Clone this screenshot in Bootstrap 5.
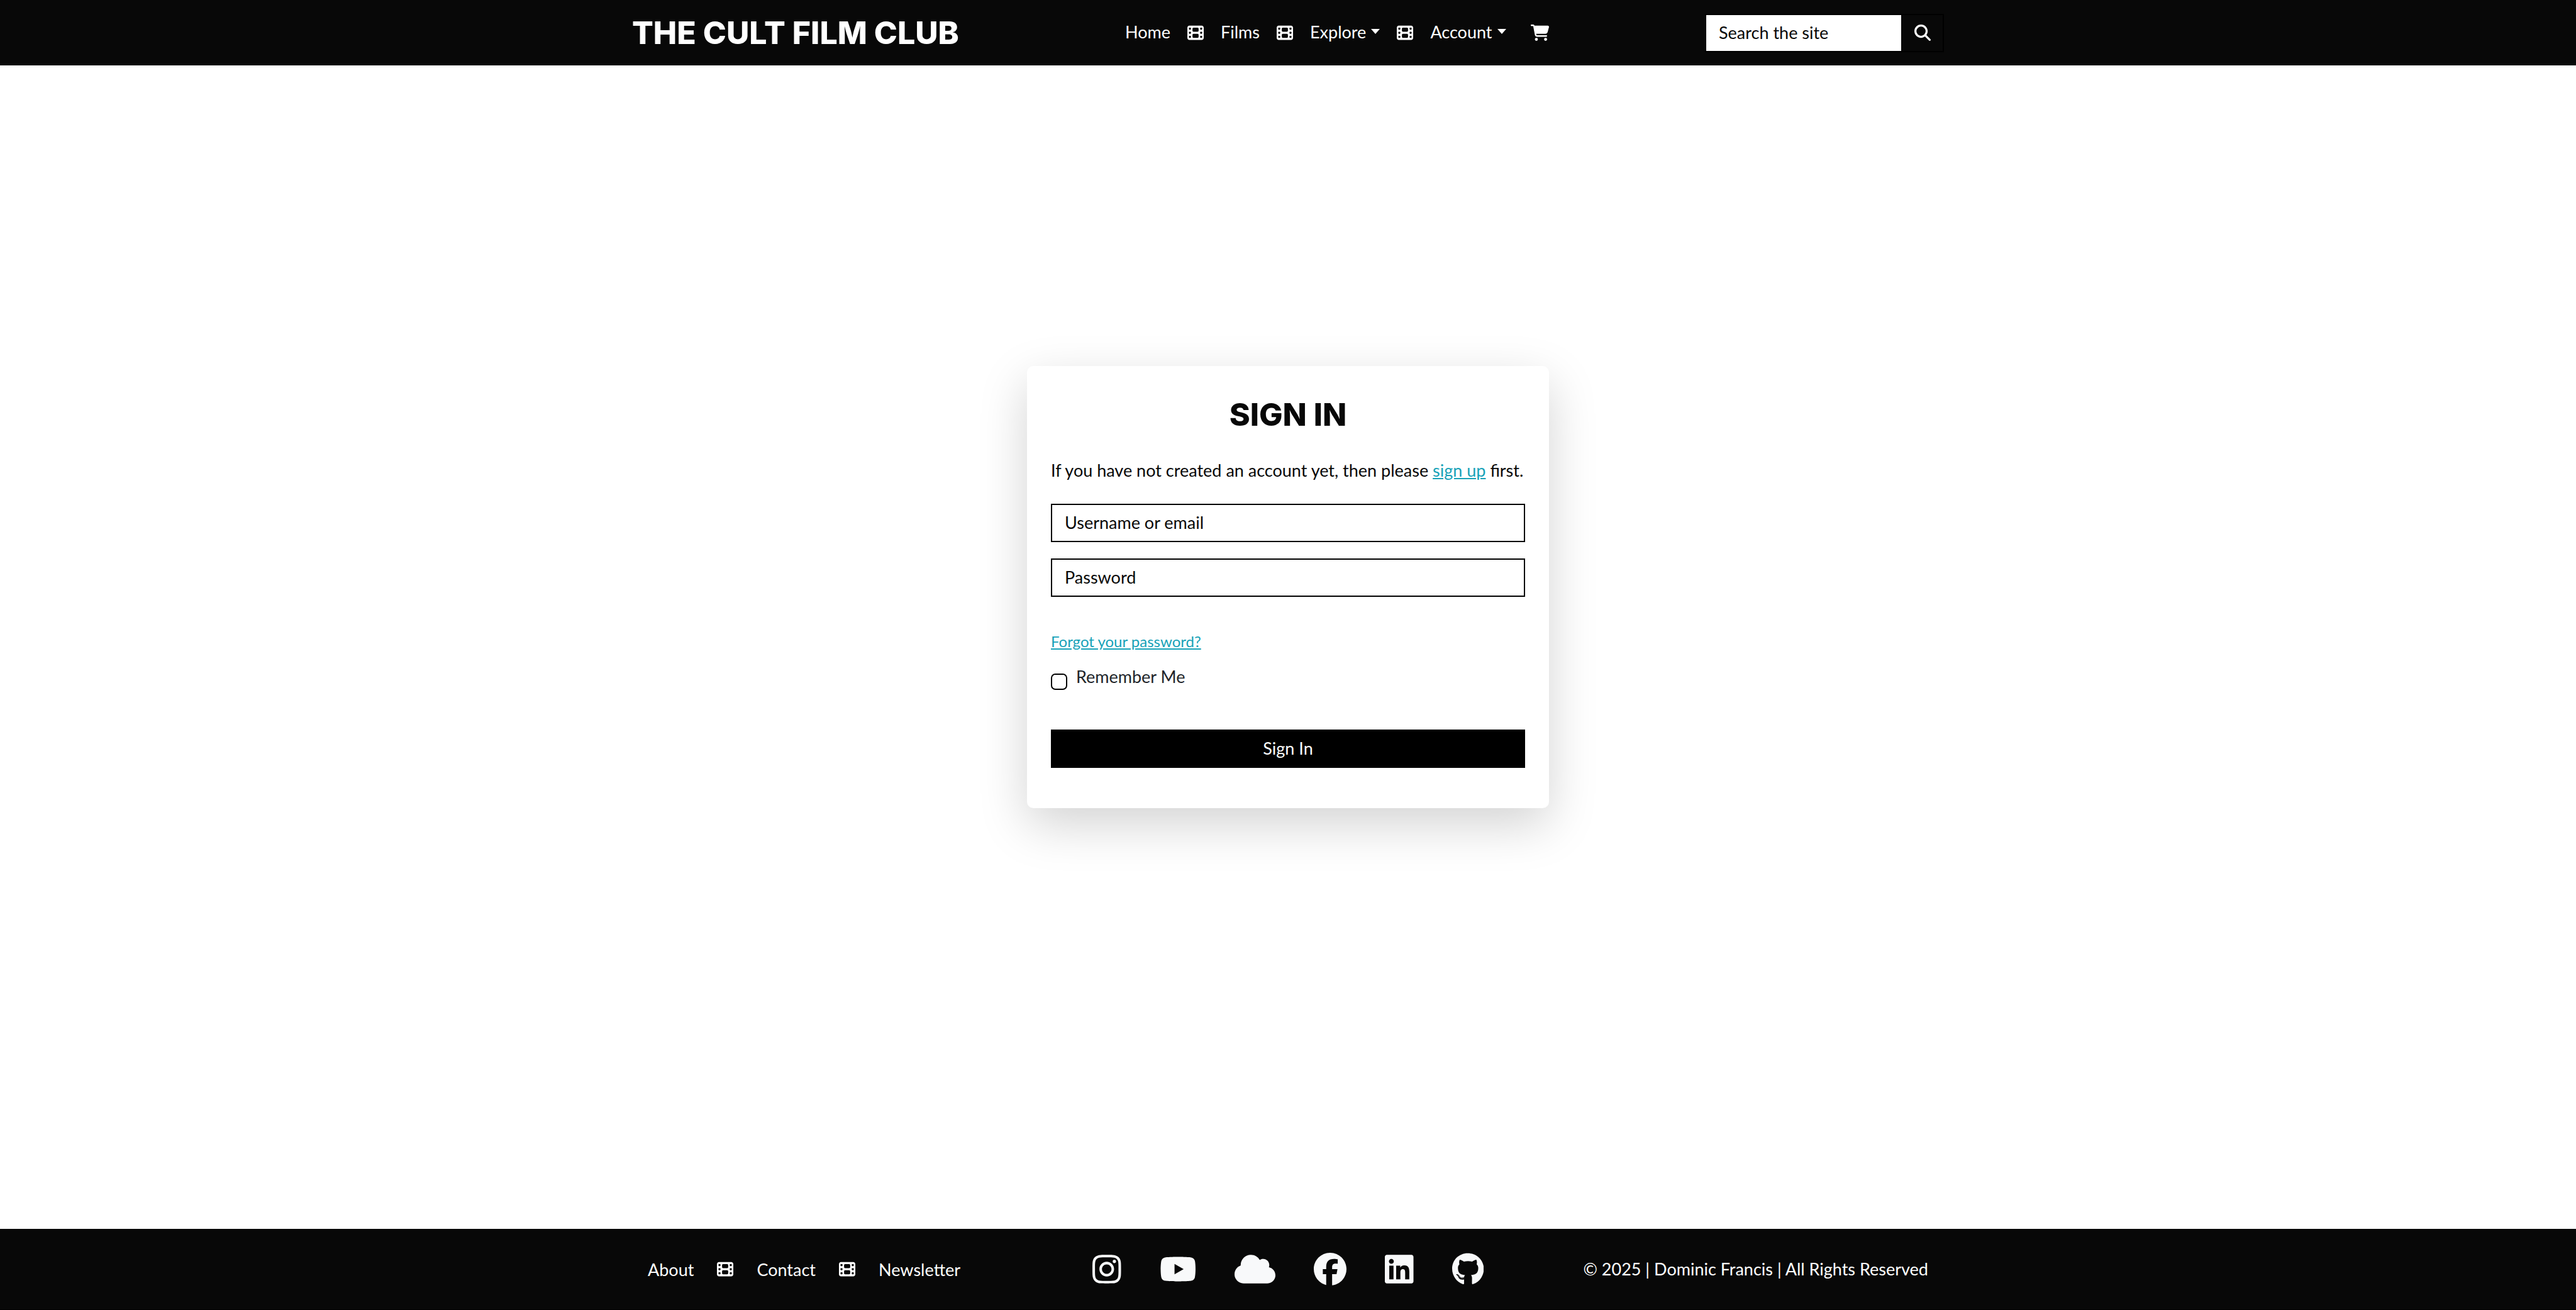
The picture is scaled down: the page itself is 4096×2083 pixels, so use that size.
<!DOCTYPE html>
<html lang="en">
<head>
<meta charset="utf-8">
<meta name="viewport" content="width=device-width, initial-scale=1">
<title>The Cult Film Club - Sign In</title>
<link rel="stylesheet" href="https://cdn.jsdelivr.net/npm/bootstrap@5.3.0/dist/css/bootstrap.min.css">
<style>
  :root { --ink: #080808; --paper: #fff; --accent: #17a2b8; --off-white: #f8f9fa; }
  body { font-family: Lato, "Open Sans", sans-serif; font-size: 27px; line-height: 39px; background: var(--paper); }
  .site-container { width: 100%; max-width: 2124px; margin: 0 auto; padding: 0 19px; }
  .site-bar { background: var(--ink); color: var(--paper); }
  .site-header { min-height: 104px; padding: 21px 0; --bs-navbar-nav-link-padding-x: 0; }
  .site-header .navbar-brand { font-family: Inter, Lato, sans-serif; font-size: 50px; line-height: 58px; font-weight: 800; color: var(--paper); margin: 0; padding: 0; }
  .site-nav { gap: 27px; padding-left: 16px; }
  .site-nav .nav-link { color: var(--paper); padding-top: 0; padding-bottom: 3px; }
  .site-nav .dropdown-toggle::after { border-width: 8px 7px 0; margin-left: 8px; }
  .site-nav .cart-item { margin-left: 12px; }
  .icon { height: 26px; width: auto; display: block; fill: currentColor; }
  .social-list .icon { height: 52px; }
  .site-search { width: 380px; }
  .form-control.field { height: 61px; border: 2px solid #000; border-radius: 0; font-size: 27px; line-height: 39px; padding: 8px 20px 10px; color: var(--ink); background: var(--paper); }
  .form-control.field::placeholder { color: var(--ink); opacity: 1; }
  .search-btn { width: 66px; border: 2px solid #000; border-left: 0; border-radius: 0; background: var(--ink); color: var(--paper); padding: 0; }
  .sign-area { min-height: calc(80vh - 8px); }
  .sign-card { width: 830px; max-width: 100%; padding: 46px 38px 64px; border: 0; border-radius: 10px; box-shadow: 0 26px 77px rgba(0, 0, 0, .175); color: var(--ink); }
  .sign-title { font-family: Inter, Lato, sans-serif; font-size: 50px; line-height: 62px; font-weight: 800; margin-bottom: 38px; }
  .sign-intro { margin-bottom: 34px; }
  .sign-card a { color: var(--accent); }
  .sign-card form .field { margin-bottom: 26px; }
  .forgot { display: inline-block; font-size: 24px; line-height: 36px; margin: 27px 0 18px; }
  .remember { min-height: 39px; gap: 14px; margin-bottom: 63px; }
  .remember .form-check-input { width: 26px; height: 26px; margin: 15px 0 0; border: 2px solid #000; border-radius: 7px; flex: none; }
  .remember label { color: #212529; }
  .sign-btn { height: 61px; border: 0; border-radius: 0; background: #000; color: var(--paper); font-size: 27px; line-height: 39px; padding: 10px 20px 12px; }
  .sign-btn:hover { background: #222; color: var(--paper); }
  .site-footer { min-height: 129px; border-bottom: 1px solid #000; }
  .footer-links { gap: 37px; padding-left: 25px; }
  .social-list { gap: 61px; color: var(--off-white); }
  .site-footer a { color: inherit; text-decoration: none; }
  .copyright { padding: 0 25px 2px 0; white-space: nowrap; }
</style>
</head>
<body class="d-flex flex-column min-vh-100">
<svg class="d-none" aria-hidden="true">
  <symbol id="film" viewBox="0 0 512 512"><path d="M0 96C0 60.7 28.7 32 64 32H448c35.3 0 64 28.7 64 64V416c0 35.3-28.7 64-64 64H64c-35.3 0-64-28.7-64-64V96zM48 368v32c0 8.800 7.200 16 16 16H96c8.800 0 16-7.200 16-16V368c0-8.800-7.200-16-16-16H64c-8.800 0-16 7.200-16 16zm368-16c-8.800 0-16 7.200-16 16v32c0 8.800 7.200 16 16 16h32c8.800 0 16-7.200 16-16V368c0-8.800-7.200-16-16-16H416zM48 240v32c0 8.800 7.200 16 16 16H96c8.800 0 16-7.200 16-16V240c0-8.800-7.200-16-16-16H64c-8.800 0-16 7.200-16 16zm368-16c-8.800 0-16 7.200-16 16v32c0 8.800 7.200 16 16 16h32c8.800 0 16-7.200 16-16V240c0-8.800-7.200-16-16-16H416zM48 112v32c0 8.800 7.200 16 16 16H96c8.800 0 16-7.200 16-16V112c0-8.800-7.200-16-16-16H64c-8.800 0-16 7.200-16 16zM416 96c-8.800 0-16 7.200-16 16v32c0 8.800 7.200 16 16 16h32c8.800 0 16-7.200 16-16V112c0-8.800-7.200-16-16-16H416zM160 128v64c0 17.700 14.300 32 32 32H320c17.700 0 32-14.300 32-32V128c0-17.700-14.300-32-32-32H192c-17.700 0-32 14.300-32 32zm32 160c-17.700 0-32 14.300-32 32v64c0 17.700 14.300 32 32 32H320c17.700 0 32-14.300 32-32V320c0-17.700-14.300-32-32-32H192z"/></symbol>
</svg>

<header class="site-bar navbar navbar-expand site-header">
  <div class="site-container d-flex flex-wrap align-items-center justify-content-between">
    <a class="navbar-brand" href="#">THE CULT FILM CLUB</a>
    <nav aria-label="Main">
      <ul class="navbar-nav site-nav align-items-center">
        <li class="nav-item"><a class="nav-link" href="#">Home</a></li>
        <li aria-hidden="true"><svg class="icon" viewBox="0 0 512 512"><use href="#film"/></svg></li>
        <li class="nav-item"><a class="nav-link" href="#">Films</a></li>
        <li aria-hidden="true"><svg class="icon" viewBox="0 0 512 512"><use href="#film"/></svg></li>
        <li class="nav-item"><a class="nav-link dropdown-toggle" href="#" role="button">Explore</a></li>
        <li aria-hidden="true"><svg class="icon" viewBox="0 0 512 512"><use href="#film"/></svg></li>
        <li class="nav-item"><a class="nav-link dropdown-toggle" href="#" role="button">Account</a></li>
        <li class="nav-item cart-item"><a class="d-block text-white" href="#" aria-label="Basket"><svg class="icon" viewBox="0 0 576 512"><path d="M0 24C0 10.700 10.700 0 24 0H69.500c22 0 41.500 12.800 50.600 32h411c26.300 0 45.500 25 38.600 50.400l-41 152.300c-8.500 31.400-37 53.300-69.500 53.300H170.700l5.400 28.500c2.200 11.300 12.100 19.500 23.600 19.500H488c13.300 0 24 10.700 24 24s-10.700 24-24 24H199.700c-34.600 0-64.300-24.600-70.700-58.500L77.400 54.500c-.7-3.800-4-6.500-7.900-6.500H24C10.700 48 0 37.300 0 24zM128 464a48 48 0 1 1 96 0 48 48 0 1 1 -96 0zm336-48a48 48 0 1 1 0 96 48 48 0 1 1 0-96z"/></svg></a></li>
      </ul>
    </nav>
    <form class="site-search d-flex" role="search">
      <input class="form-control field" type="search" placeholder="Search the site" aria-label="Search the site">
      <button class="btn search-btn d-flex align-items-center justify-content-center flex-shrink-0" type="submit" aria-label="Search"><svg class="icon" viewBox="0 0 512 512"><path d="M416 208c0 45.900-14.900 88.300-40 122.700L502.600 457.400c12.500 12.500 12.500 32.800 0 45.300s-32.800 12.500-45.300 0L330.700 376c-34.400 25.200-76.800 40-122.700 40C93.100 416 0 322.900 0 208S93.100 0 208 0S416 93.100 416 208zM208 352a144 144 0 1 0 0-288 144 144 0 1 0 0 288z"/></svg></button>
    </form>
  </div>
</header>

<main class="flex-grow-1">
  <section class="sign-area d-flex align-items-center justify-content-center">
    <div class="card sign-card">
      <h1 class="sign-title text-center">SIGN IN</h1>
      <p class="sign-intro">If you have not created an account yet, then please <a href="#">sign up</a> first.</p>
      <form>
        <input class="form-control field" type="text" placeholder="Username or email" aria-label="Username or email">
        <input class="form-control field" type="password" placeholder="Password" aria-label="Password">
        <a class="forgot" href="#">Forgot your password?</a>
        <div class="remember d-flex align-items-start">
          <input class="form-check-input" type="checkbox" id="remember">
          <label for="remember">Remember Me</label>
        </div>
        <button class="btn sign-btn d-block w-100" type="submit">Sign In</button>
      </form>
    </div>
  </section>
</main>

<footer class="site-bar site-footer d-flex align-items-center">
  <div class="site-container">
    <div class="row align-items-center gx-0">
      <div class="col-4">
        <ul class="footer-links list-unstyled d-flex align-items-center mb-0">
          <li><a href="#">About</a></li>
          <li aria-hidden="true"><svg class="icon" viewBox="0 0 512 512"><use href="#film"/></svg></li>
          <li><a href="#">Contact</a></li>
          <li aria-hidden="true"><svg class="icon" viewBox="0 0 512 512"><use href="#film"/></svg></li>
          <li><a href="#">Newsletter</a></li>
        </ul>
      </div>
      <div class="col-4">
        <ul class="social-list list-unstyled d-flex align-items-center justify-content-center mb-0">
          <li><a href="#" aria-label="Instagram"><svg class="icon" viewBox="0 0 448 512"><path d="M224.100 141c-63.600 0-114.900 51.300-114.900 114.900s51.300 114.900 114.900 114.900S339 319.500 339 255.900 287.700 141 224.100 141zm0 189.600c-41.100 0-74.700-33.500-74.700-74.700s33.500-74.700 74.700-74.700 74.700 33.500 74.700 74.700-33.600 74.700-74.700 74.700zm146.400-194.300c0 14.900-12 26.800-26.800 26.800-14.900 0-26.800-12-26.800-26.800s12-26.800 26.800-26.800 26.800 12 26.800 26.800zm76.100 27.200c-1.700-35.900-9.900-67.700-36.200-93.900-26.200-26.200-58-34.400-93.900-36.200-37-2.100-147.900-2.100-184.900 0-35.800 1.700-67.600 9.900-93.900 36.100s-34.400 58-36.200 93.900c-2.100 37-2.100 147.900 0 184.900 1.700 35.900 9.900 67.700 36.200 93.900s58 34.400 93.900 36.200c37 2.100 147.900 2.100 184.900 0 35.900-1.700 67.700-9.900 93.900-36.200 26.200-26.200 34.400-58 36.200-93.900 2.100-37 2.100-147.800 0-184.800zM398.800 388c-7.800 19.600-22.900 34.700-42.600 42.600-29.500 11.700-99.500 9-132.100 9s-102.700 2.600-132.100-9c-19.600-7.800-34.700-22.900-42.600-42.600-11.700-29.500-9-99.500-9-132.100s-2.600-102.700 9-132.100c7.800-19.600 22.900-34.700 42.600-42.600 29.500-11.700 99.500-9 132.100-9s102.700-2.600 132.100 9c19.600 7.800 34.700 22.900 42.600 42.600 11.700 29.500 9 99.500 9 132.100s2.700 102.700-9 132.100z"/></svg></a></li>
          <li><a href="#" aria-label="YouTube"><svg class="icon" viewBox="0 0 576 512"><path d="M549.655 124.083c-6.281-23.650-24.787-42.276-48.284-48.597C458.781 64 288 64 288 64S117.220 64 74.629 75.486c-23.497 6.322-42.003 24.947-48.284 48.597-11.412 42.867-11.412 132.305-11.412 132.305s0 89.438 11.412 132.305c6.281 23.650 24.787 41.500 48.284 47.821C117.220 448 288 448 288 448s170.780 0 213.371-11.486c23.497-6.321 42.003-24.171 48.284-47.821 11.412-42.867 11.412-132.305 11.412-132.305s0-89.438-11.412-132.305zm-317.510 213.508V175.185l142.739 81.205-142.739 81.201z"/></svg></a></li>
          <li><a href="#" aria-label="Bluesky"><svg class="icon" viewBox="0 0 640 512"><path d="M0 336c0 79.500 64.500 144 144 144H512c70.700 0 128-57.300 128-128c0-61.900-44-113.600-102.400-125.400c4.100-10.700 6.400-22.400 6.400-34.600c0-53-43-96-96-96c-19.700 0-38.100 6-53.300 16.200C367 64.200 315.300 32 256 32C167.600 32 96 103.600 96 192c0 2.700 .1 5.400 .2 8.100C40.200 219.800 0 273.200 0 336z"/></svg></a></li>
          <li><a href="#" aria-label="Facebook"><svg class="icon" viewBox="0 0 512 512"><path d="M512 256C512 114.600 397.400 0 256 0S0 114.600 0 256C0 376 82.700 476.800 194.200 504.500V334.200H141.400V256h52.800V222.300c0-87.100 39.400-127.500 125-127.500c16.200 0 44.200 3.200 55.700 6.400V172c-6-.6-16.500-1-29.600-1c-42 0-58.200 15.900-58.200 57.200V256h83.600l-14.400 78.200H287V510.100C413.800 494.800 512 386.900 512 256z"/></svg></a></li>
          <li><a href="#" aria-label="LinkedIn"><svg class="icon" viewBox="0 0 448 512"><path d="M416 32H31.900C14.300 32 0 46.500 0 64.300v383.400C0 465.500 14.300 480 31.900 480H416c17.600 0 32-14.500 32-32.300V64.300c0-17.800-14.400-32.300-32-32.300zM135.400 416H69V202.200h66.500V416zm-33.200-243c-21.300 0-38.500-17.300-38.500-38.500S80.900 96 102.200 96c21.200 0 38.500 17.300 38.500 38.500 0 21.300-17.200 38.500-38.500 38.500zm282.100 243h-66.400V312c0-24.800-.5-56.700-34.500-56.700-34.600 0-39.900 27-39.900 54.900V416h-66.400V202.200h63.700v29.200h.9c8.900-16.800 30.600-34.500 62.200-34.500 66.500 0 78.800 43.800 78.800 100.900V416z"/></svg></a></li>
          <li><a href="#" aria-label="GitHub"><svg class="icon" viewBox="0 0 496 512"><path d="M165.900 397.400c0 2-2.300 3.600-5.200 3.600-3.300.3-5.600-1.300-5.600-3.600 0-2 2.300-3.600 5.200-3.600 3-.3 5.600 1.300 5.600 3.600zm-31.100-4.500c-.7 2 1.300 4.300 4.300 4.900 2.600 1 5.600 0 6.200-2s-1.300-4.300-4.300-5.200c-2.600-.7-5.500.3-6.200 2.300zm44.200-1.700c-2.900.7-4.900 2.600-4.600 4.900.3 2 2.900 3.300 5.900 2.600 2.900-.7 4.900-2.600 4.600-4.600-.3-1.900-3-3.200-5.900-2.900zM244.800 8C106.100 8 0 113.300 0 252c0 110.900 69.800 205.800 169.500 239.200 12.800 2.300 17.300-5.600 17.300-12.100 0-6.200-.3-40.400-.3-61.400 0 0-70 15-84.700-29.800 0 0-11.400-29.100-27.800-36.600 0 0-22.900-15.700 1.600-15.400 0 0 24.900 2 38.600 25.800 21.900 38.600 58.600 27.500 72.900 20.900 2.300-16 8.800-27.100 16-33.700-55.900-6.200-112.300-14.300-112.300-110.500 0-27.500 7.600-41.300 23.600-58.900-2.600-6.500-11.100-33.300 2.600-67.900 20.900-6.500 69 27 69 27 20-5.600 41.500-8.500 62.800-8.500s42.800 2.900 62.800 8.500c0 0 48.100-33.600 69-27 13.700 34.700 5.200 61.400 2.600 67.900 16 17.700 25.800 31.500 25.800 58.900 0 96.500-58.900 104.200-114.800 110.500 9.200 7.900 17 22.900 17 46.400 0 33.700-.3 75.400-.3 83.600 0 6.500 4.600 14.400 17.300 12.100C428.200 457.800 496 362.900 496 252 496 113.300 383.500 8 244.800 8zM97.200 352.900c-1.300 1-1 3.300.7 5.200 1.600 1.600 3.900 2.300 5.200 1 1.300-1 1-3.300-.7-5.200-1.600-1.600-3.900-2.300-5.200-1zm-10.800-8.100c-.7 1.300.3 2.900 2.300 3.900 1.600 1 3.600.7 4.300-.7.7-1.300-.3-2.900-2.300-3.900-2-.6-3.600-.3-4.300.7zm32.400 35.600c-1.600 1.300-1 4.300 1.300 6.200 2.300 2.300 5.200 2.600 6.500 1 1.300-1.300.7-4.300-1.300-6.200-2.200-2.300-5.200-2.600-6.500-1zm-11.400-14.700c-1.600 1-1.600 3.600 0 5.900 1.600 2.300 4.300 3.300 5.600 2.300 1.600-1.300 1.600-3.900 0-6.200-1.400-2.300-4-3.300-5.600-2z"/></svg></a></li>
        </ul>
      </div>
      <div class="col-4 d-flex justify-content-end">
        <p class="copyright mb-0">© 2025 | Dominic Francis | All Rights Reserved</p>
      </div>
    </div>
  </div>
</footer>
<script src="https://cdn.jsdelivr.net/npm/bootstrap@5.3.0/dist/js/bootstrap.bundle.min.js"></script>
</body>
</html>
